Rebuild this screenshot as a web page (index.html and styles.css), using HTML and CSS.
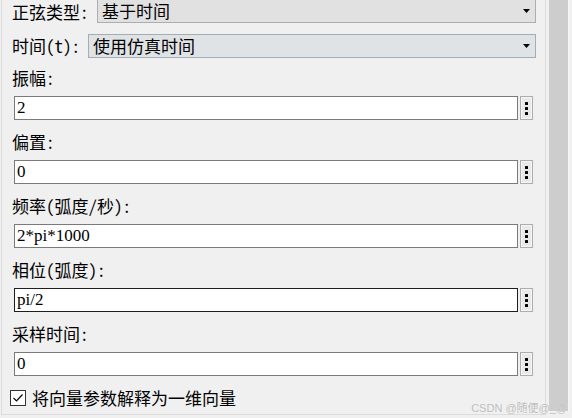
FILE: index.html
```html
<!DOCTYPE html>
<html lang="zh-CN">
<head>
<meta charset="utf-8">
<title>正弦参数</title>
<link rel="stylesheet" href="styles.css">
</head>
<body>
<div class="window">
  <div class="panel">
    <div class="select-row first">
      <span class="label">正弦类型:</span>
      <div class="select w1"><span class="sel-text">基于时间</span><svg class="arrow" width="7" height="4" viewBox="0 0 7 4"><polygon points="0,0 7,0 3.5,4" fill="#000"/></svg></div>
    </div>
    <div class="select-row second">
      <span class="label">时间(t):</span>
      <div class="select alt w2"><span class="sel-text">使用仿真时间</span><svg class="arrow" width="7" height="4" viewBox="0 0 7 4"><polygon points="0,0 7,0 3.5,4" fill="#000"/></svg></div>
    </div>

    <div class="param">
      <div class="plabel">振幅:</div>
      <div class="field"><div class="input">2</div><div class="dots"><i></i><i></i><i></i></div></div>
    </div>
    <div class="param">
      <div class="plabel">偏置:</div>
      <div class="field"><div class="input">0</div><div class="dots"><i></i><i></i><i></i></div></div>
    </div>
    <div class="param">
      <div class="plabel">频率(弧度/秒):</div>
      <div class="field"><div class="input">2*pi*1000</div><div class="dots"><i></i><i></i><i></i></div></div>
    </div>
    <div class="param">
      <div class="plabel">相位(弧度):</div>
      <div class="field"><div class="input active">pi/2</div><div class="dots"><i></i><i></i><i></i></div></div>
    </div>
    <div class="param">
      <div class="plabel">采样时间:</div>
      <div class="field"><div class="input">0</div><div class="dots"><i></i><i></i><i></i></div></div>
    </div>

    <div class="check">
      <span class="box"><svg width="14" height="14" viewBox="0 0 14 14"><polyline points="2.5,7 5.5,10 11.5,3.5" fill="none" stroke="#000" stroke-width="1.2"/></svg></span>
      <span class="check-text">将向量参数解释为一维向量</span>
    </div>
  </div>
  <div class="scroll"><div class="thumb"></div></div>
  <div class="watermark">CSDN @随便@_@</div>
</div>
</body>
</html>
```
FILE: styles.css
```css
html, body {
  margin: 0;
  padding: 0;
  background: #f0f0f0;
}
body {
  width: 572px;
  height: 418px;
  overflow: hidden;
  font-family: "Noto Sans Mono CJK SC", "Noto Sans CJK SC", sans-serif;
  font-size: 17px;
  color: #000;
}
.window {
  position: relative;
  display: flex;
  align-items: flex-start;
  height: 418px;
}
.panel {
  box-sizing: border-box;
  margin-left: 1px;
  width: 545px;
  height: 415px;
  border-left: 1px solid #dcdcdc;
  border-right: 1px solid #dcdcdc;
  border-bottom: 1px solid #dcdcdc;
  padding: 0 9px 0 12px;
  overflow: hidden;
}
.select-row {
  display: flex;
  align-items: center;
  height: 24px;
}
.select-row.first { height: 23px; }
.select-row.second { margin-top: 11px; }
.label {
  margin-left: -2px;
  line-height: 22px;
}
.select {
  box-sizing: border-box;
  margin-left: auto;
  height: 24px;
  display: flex;
  align-items: center;
  justify-content: space-between;
  background: #e1e1e1;
  border: 1px solid #adadad;
  padding: 0 5px 0 4px;
}
.select.w1 {
  height: 23px;
  border-top-width: 0;
}
.select.alt {
  background: #e0e3e5;
  border-color: #a3adb4;
}
.w1 { width: 439px; }
.w2 { width: 448px; }
.sel-text { line-height: 22px; }
.arrow { display: block; }

.param { margin-top: 12px; }
.select-row.second + .param { margin-top: 10px; }
.plabel {
  margin-left: -2px;
  height: 22px;
  line-height: 20px;
}
.field {
  margin-top: 6px;
  display: flex;
  align-items: flex-start;
}
.input {
  box-sizing: border-box;
  width: 504px;
  height: 24px;
  background: #fff;
  border: 1px solid #7a7a7a;
  padding-left: 2px;
  font-family: "Liberation Serif", serif;
  font-size: 17px;
  line-height: 22px;
}
.input.active { border-color: #1e1e1e; }
.dots {
  box-sizing: border-box;
  margin-left: 2px;
  width: 13px;
  height: 24px;
  border: 1px solid #adadad;
  background: #e9e9e9;
  box-shadow: inset 0 0 0 1px #f6f6f6;
  display: flex;
  flex-direction: column;
  align-items: center;
  justify-content: center;
  gap: 2px;
}
.dots i {
  display: block;
  width: 3px;
  height: 3px;
  border-radius: 0.5px;
  background: #000;
}
.check {
  margin-top: 14px;
  margin-left: -4px;
  display: flex;
  align-items: center;
  height: 16px;
}
.box {
  box-sizing: border-box;
  width: 16px;
  height: 16px;
  border: 1px solid #333;
  background: #fff;
  display: flex;
  align-items: center;
  justify-content: center;
}
.box svg { display: block; }
.check-text {
  margin-left: 6px;
  line-height: 16px;
}
.scroll {
  box-sizing: border-box;
  width: 26px;
  height: 418px;
  padding-left: 3px;
}
.thumb {
  width: 19px;
  height: 411px;
  background: #cdcdcd;
  border-right: 1px solid #f7f7f7;
}
.watermark {
  position: absolute;
  right: 5px;
  bottom: 3px;
  font-family: "Liberation Sans", "Noto Sans CJK SC", sans-serif;
  font-size: 11px;
  line-height: 14px;
  color: #bdbdbd;
  text-shadow: 0 0 1px rgba(255,255,255,0.6);
}
```
